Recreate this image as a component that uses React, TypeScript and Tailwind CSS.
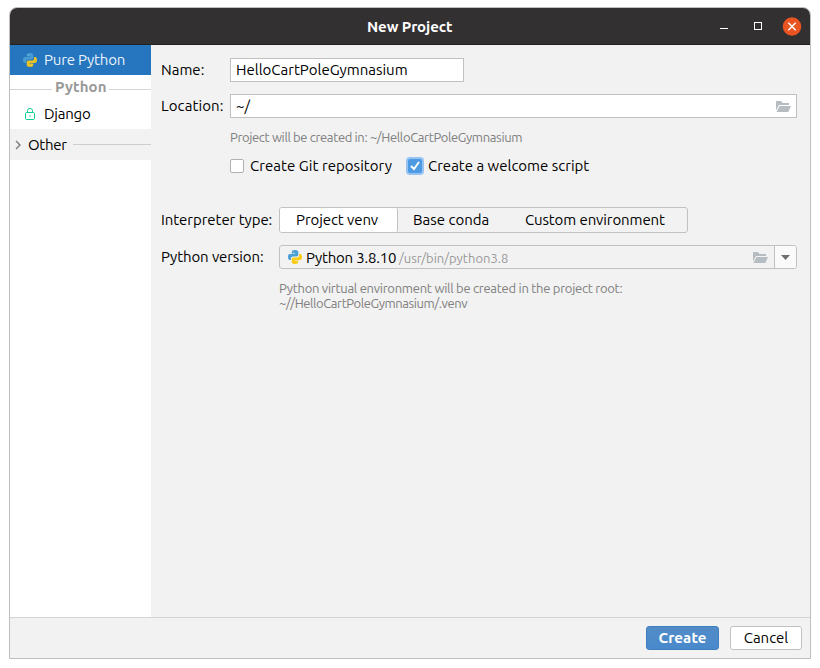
import React from "react";

function PythonIcon({ className = "" }: { className?: string }) {
  return (
    <svg width="14" height="14" viewBox="0 0 14 14" className={`shrink-0 ${className}`}>
      <path d="M7 0C4.6 0 3.7.8 3.7 2v1.5h3.6V4H2C.7 4 0 5 0 7s.7 3 1.900 3H3V8.300C3 7.200 3.900 6.500 5 6.500h3.600c1 0 1.700-.7 1.700-1.700V2C10.300.7 9.200 0 7 0Z" fill="#4aa0d2" />
      <path d="M7 14c2.400 0 3.300-.8 3.300-2v-1.500H6.700V10H12c1.300 0 2-1 2-3s-.7-3-1.900-3H11v1.700c0 1.100-.9 1.800-2 1.800H5.400c-1 0-1.700.7-1.700 1.700V12c0 1.300 1.100 2 3.300 2Z" fill="#fbcb16" />
      <circle cx="5.300" cy="1.900" r=".5" fill="#b5d8ec" />
      <circle cx="8.700" cy="12.100" r=".5" fill="#fde992" />
    </svg>
  );
}

function FolderIcon() {
  return (
    <svg width="15" height="11" viewBox="0 0 15 11" className="shrink-0">
      <path d="M0 0h5l1.500 2H13v2H3L0 9.500Z" fill="#b5bdc2" />
      <path d="M3.500 5H15l-2.700 6H.5Z" fill="#b5bdc2" />
    </svg>
  );
}

function Sidebar() {
  return (
    <aside className="w-[141px] shrink-0 bg-white">
      <div className="flex h-[30px] items-center gap-[7px] bg-[#2675bf] pl-[13px] text-[#eaf3fb]">
        <PythonIcon className="opacity-90" />
        <span className="tracking-[-0.17px]">Pure Python</span>
      </div>
      <div className="flex h-[24px] items-center text-[#999]">
        <span className="mt-[5px] h-px w-[42px] bg-[#d4d4d4]" />
        <span className="ml-[3px] w-[54px] font-bold tracking-[0.15px]">Python</span>
        <span className="mt-[5px] h-px flex-1 bg-[#d4d4d4]" />
      </div>
      <div className="flex h-[30px] items-center gap-[9px] pl-[15px]">
        <svg width="10" height="12" viewBox="0 0 10 12" fill="none" stroke="#10cf93">
          <rect x=".5" y="4.500" width="9" height="7" rx="1" />
          <path d="M2.500 4.500v-2Q2.500.5 5 .5t2.500 2v2M5 7.300v1.700" />
        </svg>
        <span className="tracking-[-0.25px]">Django</span>
      </div>
      <div className="flex h-[31px] items-center bg-[#f2f2f2] pl-[5px]">
        <svg width="6" height="10" viewBox="0 0 6 10" fill="none" stroke="#7b7b7b" strokeWidth="1.400">
          <path d="m1 1 4 4-4 4" />
        </svg>
        <span className="ml-[7px] w-[45px] tracking-[-0.3px]">Other</span>
        <span className="h-px flex-1 bg-[#cdcdcd]" />
      </div>
    </aside>
  );
}

export default function App() {
  return (
    <div className="h-[668px] w-[820px] overflow-hidden bg-white pt-[7px] pl-[9px] font-['Ubuntu','Noto_Sans',sans-serif] text-[15px] leading-[18px] whitespace-nowrap text-black">
      <div className="flex h-[652px] w-[802px] flex-col overflow-hidden rounded-t-[8px] border border-[#bebebe] bg-[#f2f2f2]">
        <header className="flex h-[37px] shrink-0 items-center border-b border-[#222] bg-[#333031] text-white">
          <span className="mt-px ml-[357px] w-[353px] font-bold tracking-[-0.09px]">New Project</span>
          <span className="mt-[5px] h-px w-[8px] bg-white" />
          <span className="ml-[26px] h-[8px] w-[8px] border border-white" />
          <svg className="ml-[20px]" width="20" height="19" viewBox="0 0 20 19">
            <circle cx="10" cy="9.500" r="9.300" fill="#e95420" />
            <path d="m6.300 5.800 7.400 7.400m0-7.400-7.400 7.400" stroke="white" strokeWidth="1.500" />
          </svg>
        </header>
        <div className="flex min-h-0 flex-1">
          <Sidebar />
          <main className="flex-1 pt-[13px] pl-[10px]">
            <div className="flex h-[24px] items-center">
              <label className="w-[69px]">Name:</label>
              <div className="flex h-[24px] w-[234px] items-center border border-[#c1c1c1] bg-white pl-[5px]">
                <span>HelloCartPoleGymnasium</span>
              </div>
            </div>
            <div className="mt-[12px] flex h-[24px] items-center">
              <label className="w-[69px] tracking-[0.1px]">Location:</label>
              <div className="flex h-[24px] w-[567px] items-center justify-between border border-[#c1c1c1] bg-white pr-[5px] pl-[5px]">
                <span>~/</span>
                <FolderIcon />
              </div>
            </div>
            <div className="mt-[10px] ml-[69px] text-[13px] tracking-[-0.36px] text-[#808080]">
              <span>Project will be created in: ~/HelloCartPoleGymnasium</span>
            </div>
            <div className="mt-[10px] ml-[69px] flex h-[20px] items-center">
              <span className="h-[14px] w-[14px] rounded-[2px] border border-[#b0b0b0] bg-white" />
              <span className="ml-[6px] w-[156px] tracking-[0.05px]">Create Git repository</span>
              <span className="flex h-[18px] w-[18px] items-center justify-center rounded-[4px] border-2 border-[#97c3f3] bg-[#4b9ae2]">
                <svg width="10" height="10" viewBox="0 0 10 10" fill="none" stroke="white" strokeWidth="2">
                  <path d="m1 5 3 3 5-7" />
                </svg>
              </span>
              <span className="ml-[4px]">Create a welcome script</span>
            </div>
            <div className="mt-[31px] flex h-[26px] items-center">
              <label className="w-[118px] tracking-[-0.05px]">Interpreter type:</label>
              <div className="flex h-[26px] w-[409px] items-center rounded-[3px] border border-[#c1c1c1]">
                <div className="flex h-[24px] w-[118px] items-center rounded-[2px] border-r border-[#c1c1c1] bg-white pl-[16px]">
                  <span className="tracking-[-0.08px]">Project venv</span>
                </div>
                <span className="ml-[15px] w-[112px]">Base conda</span>
                <span className="tracking-[-0.1px]">Custom environment</span>
              </div>
            </div>
            <div className="mt-[12px] flex h-[24px] items-center">
              <label className="w-[118px] tracking-[-0.1px]">Python version:</label>
              <div className="flex h-[24px] w-[518px] items-center overflow-hidden rounded-[3px] border border-[#c1c1c1] pl-[8px]">
                <PythonIcon />
                <span className="mt-px ml-[4px] w-[93px] tracking-[-0.2px]">Python 3.8.10</span>
                <span className="mt-px flex-1 text-[13px] text-[#999]">/usr/bin/python3.8</span>
                <FolderIcon />
                <span className="ml-[6px] flex h-[22px] w-[22px] items-center justify-center border-l border-[#c1c1c1] bg-[#fafafa]">
                  <svg width="9" height="5" viewBox="0 0 9 5">
                    <path d="M0 0h9L4.500 5Z" fill="#6e6e6e" />
                  </svg>
                </span>
              </div>
            </div>
            <div className="mt-[12px] ml-[118px] text-[13px] leading-[15px] text-[#808080]">
              <div className="tracking-[-0.27px]">Python virtual environment will be created in the project root:</div>
              <div className="tracking-[-0.41px]">~//HelloCartPoleGymnasium/.venv</div>
            </div>
          </main>
        </div>
        <footer className="flex h-[41px] shrink-0 items-center justify-end gap-[11px] border-t border-[#d3d3d3] pr-[8px]">
          <button className="h-[24px] w-[73px] rounded-[3px] border border-[#3f7fc0] bg-linear-to-b from-[#528cc7] to-[#4989cc] font-bold tracking-[0.15px] text-white">Create</button>
          <button className="h-[24px] w-[72px] rounded-[3px] border border-[#c1c1c1] bg-white">Cancel</button>
        </footer>
      </div>
    </div>
  );
}
